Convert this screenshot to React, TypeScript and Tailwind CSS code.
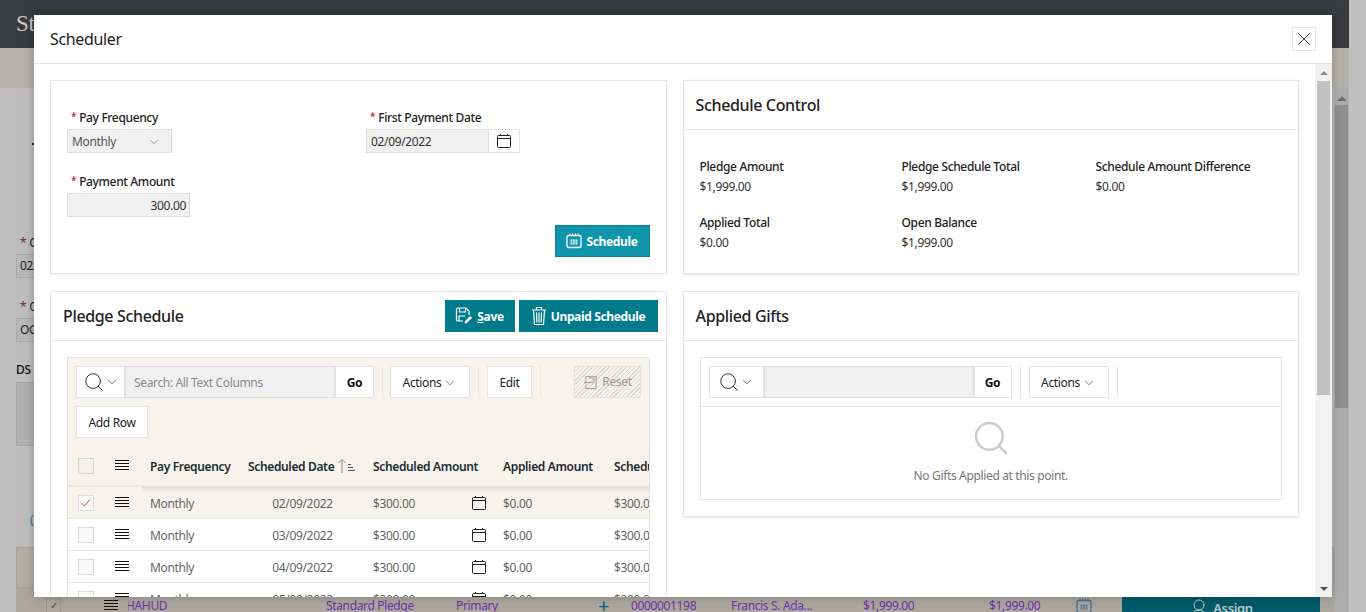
import { ChevronDown, Search, UserRoundPlus, X } from "lucide-react";

const rows = ["02/09/2022", "03/09/2022", "04/09/2022", "05/09/2022"];
const tableCols = "grid w-[600px] grid-cols-[34px_40px_98px_125px_130px_111px_62px]";

function DateIcon({ className = "" }: { className?: string }) {
  return (
    <svg viewBox="0 0 16 16" className={`size-4 ${className}`} fill="none" stroke="currentColor">
      <rect x="1.5" y="2.5" width="13" height="12" rx="1" />
      <path d="M1.5 5.5h13M4.5 1v2M11.5 1v2" />
    </svg>
  );
}

function Hamburger() {
  return (
    <svg viewBox="0 0 14 12" className="h-3 w-[14px]" stroke="#111" fill="none">
      <path d="M0 .5h14M0 3.5h14M0 6.5h14M0 9.5h14" />
    </svg>
  );
}

function CalendarGrid({ className = "", gridColor = "#0e95ac" }: { className?: string; gridColor?: string }) {
  return (
    <svg viewBox="0 0 16 16" className={className} fill="none" stroke="currentColor">
      <rect x="1" y="2.5" width="14" height="12" rx="1.5" strokeWidth="1.3" />
      <path d="M4 .5v2M6.5 .5v2M9.5 .5v2M12 .5v2" />
      <path d="M4.5 6.5h7v5h-7z" fill="currentColor" stroke="none" />
      <path d="M4 8.2h8M4 10h8M6.6 6v6M9.3 6v6" stroke={gridColor} strokeWidth=".6" />
    </svg>
  );
}

function SaveIcon() {
  return (
    <svg viewBox="0 0 18 18" className="size-[18px]" fill="none" stroke="currentColor" strokeWidth="1.2">
      <path d="M8 14H3a1.5 1.5 0 0 1-1.5-1.5v-10A1.5 1.5 0 0 1 3 1h8l3 3v4" />
      <path d="M4.5 1v4h6V1M4 14V9h6" />
      <path d="M9.5 16.5l.7-2.6 5-5 1.9 1.9-5 5z" fill="currentColor" stroke="none" />
    </svg>
  );
}

function TrashIcon() {
  return (
    <svg viewBox="0 0 16 20" className="h-5 w-4" fill="none" stroke="currentColor" strokeWidth="1.2">
      <path d="M1 4h14M5.5 4V1.5h5V4" />
      <path d="M2.5 4l1 14.5h9l1-14.5M5.5 6.5l.3 10M8 6.5v10M10.5 6.5l-.3 10" />
    </svg>
  );
}

function ToolButton({ children, className = "" }: { children: React.ReactNode; className?: string }) {
  return (
    <div className={`flex h-8 items-center justify-center border border-[#e4e4e4] bg-white pt-px text-xs text-[#222] ${className}`}>
      {children}
    </div>
  );
}

function Sep({ className = "mr-2" }: { className?: string }) {
  return <div className={`ml-2 h-8 w-px bg-[#e8e6e0] ${className}`} />;
}

function SearchBox({ placeholder, buttonWidth, goWidth }: { placeholder?: string; buttonWidth: string; goWidth: string }) {
  return (
    <div className="flex h-8">
      <div className={`flex items-center justify-center border border-[#e4e4e4] bg-white text-[#222] ${buttonWidth}`}>
        <Search className="size-[22px]" strokeWidth={1} />
        <ChevronDown className="size-[14px]" strokeWidth={1.2} />
      </div>
      <div className="flex w-[210px] items-center border border-[#dedede] bg-[#f0f0f0] pt-px pl-2 text-xs text-[#8a8a8a]">
        {placeholder}
      </div>
      <div className={`flex items-center justify-center border border-[#e4e4e4] bg-white pt-px text-xs font-bold text-[#111] ${goWidth}`}>
        Go
      </div>
    </div>
  );
}

function Required({ children }: { children: React.ReactNode }) {
  return (
    <div className="mb-[3px] pl-1 text-xs leading-4 font-medium text-[#222]">
      <span className="mr-[3px] align-[2px] text-[10px] leading-none text-[#b5213a]">*</span>
      {children}
    </div>
  );
}

function Stat({ label, value }: { label: string; value: string }) {
  return (
    <div>
      <div className="text-xs leading-4 font-medium text-[#222]">{label}</div>
      <div className="mt-1 text-xs leading-4 text-[#333]">{value}</div>
    </div>
  );
}

function Background() {
  return (
    <div className="flex h-[612px] w-full overflow-hidden bg-[#bdbdbd]">
      <div className="flex w-[1349px] flex-col">
        <div className="flex h-12 shrink-0 items-center bg-[#3a3b3f] pl-4 font-['Liberation_Serif',serif] text-[23px] text-[#c9c9c9]">
          Stewardship
        </div>
        <div className="h-10 shrink-0 bg-[#b5b1ab]" />
        <div className="flex min-h-0 flex-1">
          <div className="flex min-w-0 flex-1 flex-col overflow-hidden pl-4 [&>*]:shrink-0">
            <div className="mt-[55px] ml-4 size-[2px] bg-[#222]" />
            <div className="mt-[90px] pl-1 text-xs leading-4 text-[#222]">
              <span className="mr-[3px] text-[#8c1f35]">*</span>G
            </div>
            <div className="mt-[3px] flex h-6 w-[60px] items-center border border-[#a9a9a9] bg-[#b8b8b8] pl-[3px] text-xs text-[#222]">
              02/
            </div>
            <div className="mt-[21px] pl-1 text-xs leading-4 text-[#222]">
              <span className="mr-[3px] text-[#8c1f35]">*</span>O
            </div>
            <div className="mt-[3px] flex h-6 w-[60px] items-center border border-[#a9a9a9] bg-[#b8b8b8] pl-[3px] text-xs text-[#222]">
              OG
            </div>
            <div className="mt-5 text-xs leading-4 font-medium text-[#111]">DS</div>
            <div className="mt-1 h-16 w-[60px] border border-[#a5a5a5] bg-[#b0b0b0]" />
            <div className="mt-[66px] pl-[14px] text-xs leading-4 text-[#2a6d9e]">(</div>
            <div className="mt-[19px] h-[41px] border border-[#a6a39c] bg-[#b1aea6]" />
            <div className="flex h-[34px] items-center border-t border-[#a6a39c] bg-[#aba79f] pl-[30px] text-xs text-[#6f2fa8]">
              <div className="flex size-[15px] items-center justify-center border border-[#9a968e] text-[10px] text-[#5b3b3b]">✓</div>
              <div className="ml-[43px] w-[24px]"><Hamburger /></div>
              <div className="w-[198px] overflow-hidden whitespace-nowrap"><span className="-ml-[2px] inline-block">HAHUD</span></div>
              <div className="w-[130px]">Standard Pledge</div>
              <div className="w-[142px]">Primary</div>
              <div className="w-[33px] text-xl leading-none text-[#0b5f8a]">+</div>
              <div className="w-[100px]">0000001198</div>
              <div className="w-[132px]">Francis S. Ada...</div>
              <div className="w-[126px]">$1,999.00</div>
              <div className="w-[87px]">$1,999.00</div>
              <CalendarGrid className="size-4 text-[#44708a]" gridColor="#aba79f" />
              <div className="ml-[30px] flex h-full w-[198px] items-center justify-center gap-0 bg-[#015a68] pt-[6px] text-[13px] font-semibold text-[#b9c9cc]">
                <UserRoundPlus className="size-6" strokeWidth={1} />
                Assign
              </div>
            </div>
          </div>
          <div className="flex w-[15px] shrink-0 flex-col bg-[#aeaeae] px-px pt-[8px]">
            <div className="mx-auto border-x-[5px] border-b-[5px] border-x-transparent border-b-[#6f6f6f]" />
            <div className="mt-[4px] h-[303px] bg-[#8f8f8f]" />
          </div>
        </div>
      </div>
      <div className="flex-1 bg-[#c0c0c0]" />
    </div>
  );
}

function ScheduleTable() {
  return (
    <div className="relative h-[400px] overflow-hidden border border-[#e6e3dc] bg-white">
      <div className="bg-[#f6f3ec] pt-2">
        <div className="flex flex-wrap items-center gap-y-2 pl-2">
          <SearchBox placeholder="Search: All Text Columns" buttonWidth="w-[49px]" goWidth="w-[39px]" />
          <Sep className="mr-[7px]" />
          <ToolButton className="w-20 gap-[2px]">
            Actions <ChevronDown className="size-[14px] text-[#1f4f6f]" strokeWidth={1.2} />
          </ToolButton>
          <Sep />
          <ToolButton className="w-[45px]">Edit</ToolButton>
          <Sep />
          <div className="ml-[25px] flex h-8 w-[67px] items-center justify-center gap-1 border border-[#e4e2dc] bg-[repeating-linear-gradient(135deg,#dcdad4_0,#dcdad4_1px,#f6f3ec_1px,#f6f3ec_3px)] text-xs text-[#9a9a9a]">
            <svg viewBox="0 0 16 16" className="size-[15px]" fill="none" stroke="#999" strokeWidth="1">
              <path d="M3 5V1.5h11v13H3V11M1.5 8h8a2.5 2.5 0 0 0 0-5H6M4 5.5L1.5 8 4 10.5" />
            </svg>
            Reset
          </div>
          <ToolButton className="w-[72px]">Add Row</ToolButton>
        </div>
        <div className={`${tableCols} mt-[8px] h-[41px] items-center border-b-2 border-[#ebe8e1] text-xs font-semibold whitespace-nowrap text-[#1f2a33]`}>
          <div className="flex justify-center pl-[1px]">
            <div className="size-4 border border-[#d5d3cd] bg-[#f2f0eb]" />
          </div>
          <div className="flex justify-center"><Hamburger /></div>
          <div className="pt-[2px] pl-2">Pay Frequency</div>
          <div className="flex items-center pl-2">
            <span className="pt-[2px]">Scheduled Date</span>
            <svg viewBox="0 0 18 16" className="ml-[3px] h-4 w-[18px]" fill="none" stroke="#888">
              <path d="M5 15V2M1.5 5L5 1.5 8.5 5" />
              <path d="M11 6.5h3M11 9.5h5M11 12.5h7" stroke="#555" />
            </svg>
          </div>
          <div className="pt-[2px] pl-2">Scheduled Amount</div>
          <div className="pt-[2px] pl-2">Applied Amount</div>
          <div className="overflow-hidden pt-[2px] pl-2">Scheduled</div>
        </div>
      </div>
      <div className="absolute top-[129px] right-0 left-[74px] h-[6px] bg-gradient-to-b from-[#dedbd4] to-transparent" />
      {rows.map((date, i) => (
        <div
          key={date}
          className={`h-8 border-b border-[#e9e9e9] ${i === 0 ? "bg-[#f6f3ec]" : "bg-white"}`}
        >
          <div className={`${tableCols} h-full items-center text-xs whitespace-nowrap text-[#666]`}>
            <div className="flex justify-center pl-[1px]">
              <div className="flex size-4 items-center justify-center border border-[#dcdcdc] bg-[#f9f9f9]">
                {i === 0 && (
                  <svg viewBox="0 0 12 12" className="size-3" fill="none" stroke="#c2544f">
                    <path d="M2 6.5L4.5 9 10 2.5" />
                  </svg>
                )}
              </div>
            </div>
            <div className="flex justify-center"><Hamburger /></div>
            <div className="pt-[2px] pl-2">Monthly</div>
            <div className="pt-[2px] text-center">{date}</div>
            <div className="flex items-center justify-between pr-[8px] pl-2">
              <span className="pt-[2px]">$300.00</span>
              <DateIcon className="text-[#222]" />
            </div>
            <div className="pt-[2px] pl-2">$0.00</div>
            <div className="overflow-hidden pt-[2px] pl-2">$300.00</div>
          </div>
        </div>
      ))}
    </div>
  );
}

function Modal() {
  return (
    <div className="absolute top-[15px] left-[34px] flex h-[582px] w-[1298px] flex-col bg-white shadow-[0_0_10px_rgba(0,0,0,0.25)]">
      <div className="flex h-[49px] shrink-0 items-center justify-between border-b border-[#e4e4e4] pr-[16px] pl-4">
        <h1 className="text-base leading-5 font-normal text-[#222]">Scheduler</h1>
        <div className="flex size-6 items-center justify-center border border-[#e4e4e4]">
          <X className="size-[22px] text-[#333]" strokeWidth={1} />
        </div>
      </div>
      <div className="flex min-h-0 flex-1">
        <div className="grid flex-1 grid-cols-2 gap-x-4 gap-y-[17px] overflow-hidden px-4 pt-4 [grid-template-rows:194px_auto]">
          <section className="relative border border-[#e6e6e6] bg-white px-4 pt-[29px] shadow-[0_1px_3px_rgba(0,0,0,0.06)]">
            <div className="flex">
              <div className="w-[299px]">
                <Required>Pay Frequency</Required>
                <div className="flex h-6 w-[105px] items-center justify-between border border-[#dcdcdc] bg-[#f0f0f0] pt-px pr-[10px] pl-1 text-xs text-[#555]">
                  Monthly
                  <ChevronDown className="size-[14px] text-[#777]" strokeWidth={1.2} />
                </div>
              </div>
              <div>
                <Required>First Payment Date</Required>
                <div className="flex h-6">
                  <div className="flex w-[123px] items-center border border-[#dcdcdc] bg-[#f0f0f0] pt-px pl-1 text-xs text-[#333]">
                    02/09/2022
                  </div>
                  <div className="flex w-[31px] items-center justify-center border border-l-0 border-[#e4e4e4] text-[#222]">
                    <DateIcon />
                  </div>
                </div>
              </div>
            </div>
            <div className="mt-[21px]">
              <Required>Payment Amount</Required>
              <div className="flex h-6 w-[123px] items-center justify-end border border-[#dcdcdc] bg-[#f0f0f0] pt-px pr-[3px] text-xs text-[#333]">
                300.00
              </div>
            </div>
            <div className="absolute top-[144px] right-4 flex h-8 w-[95px] items-center justify-center gap-1 border border-[#0b8299] bg-[#0e95ac] text-xs font-bold text-white">
              <CalendarGrid className="size-4" />
              <span className="pt-px">Schedule</span>
            </div>
          </section>

          <section className="border border-[#e6e6e6] bg-white shadow-[0_1px_3px_rgba(0,0,0,0.1)]">
            <div className="flex h-[49px] items-center border-b border-[#e6e6e6] pl-3 text-base font-medium text-[#222]">
              Schedule Control
            </div>
            <div className="grid grid-cols-[202px_194px_1fr] gap-y-5 pt-[29px] pl-4">
              <Stat label="Pledge Amount" value="$1,999.00" />
              <Stat label="Pledge Schedule Total" value="$1,999.00" />
              <Stat label="Schedule Amount Difference" value="$0.00" />
              <Stat label="Applied Total" value="$0.00" />
              <Stat label="Open Balance" value="$1,999.00" />
            </div>
          </section>

          <section className="border border-[#e6e6e6] bg-white">
            <div className="flex h-[49px] items-center justify-between border-b border-[#e6e6e6] pr-2 pl-3">
              <h2 className="text-base font-medium text-[#222]">Pledge Schedule</h2>
              <div className="flex gap-1">
                <div className="flex h-8 w-[70px] items-center justify-center gap-1 bg-[#007b8c] text-xs font-bold text-white">
                  <SaveIcon />
                  <span className="pt-px"><span className="underline">S</span>ave</span>
                </div>
                <div className="flex h-8 w-[139px] items-center justify-center gap-1 bg-[#007b8c] text-xs font-bold text-white">
                  <TrashIcon />
                  <span className="pt-px">Unpaid Schedule</span>
                </div>
              </div>
            </div>
            <div className="px-4 pt-4">
              <ScheduleTable />
            </div>
          </section>

          <section className="self-start border border-[#e6e6e6] bg-white shadow-[0_1px_3px_rgba(0,0,0,0.1)]">
            <div className="flex h-[49px] items-center border-b border-[#e6e6e6] pl-3 text-base font-medium text-[#222]">
              Applied Gifts
            </div>
            <div className="px-4 py-4">
              <div className="h-[143px] border border-[#e4e4e4]">
                <div className="flex h-[49px] items-start border-b border-[#e4e4e4] pt-2 pl-2">
                  <SearchBox buttonWidth="w-[55px]" goWidth="w-[38px]" />
                  <Sep />
                  <ToolButton className="w-20 gap-[2px]">
                    Actions <ChevronDown className="size-[14px] text-[#1f4f6f]" strokeWidth={1.2} />
                  </ToolButton>
                  <Sep />
                </div>
                <div className="flex flex-col items-center pt-[11px] text-[#ccc]">
                  <Search className="size-10" strokeWidth={1.5} />
                  <div className="mt-[10px] text-xs leading-4 text-[#777]">No Gifts Applied at this point.</div>
                </div>
              </div>
            </div>
          </section>
        </div>
        <div className="flex w-[17px] shrink-0 flex-col items-center bg-[#f1f1f1] pt-[7px]">
          <div className="border-x-[4px] border-b-[4px] border-x-transparent border-b-[#8a8a8a]" />
          <div className="mt-[6px] h-[314px] w-[13px] bg-[#c1c1c1]" />
          <div className="mt-auto mb-[6px] border-x-[4px] border-t-[4px] border-x-transparent border-t-[#505050]" />
        </div>
      </div>
    </div>
  );
}

export default function App() {
  return (
    <main className="relative h-[612px] overflow-hidden font-['Noto_Sans',sans-serif] tracking-[-0.35px]">
      <Background />
      <Modal />
    </main>
  );
}
